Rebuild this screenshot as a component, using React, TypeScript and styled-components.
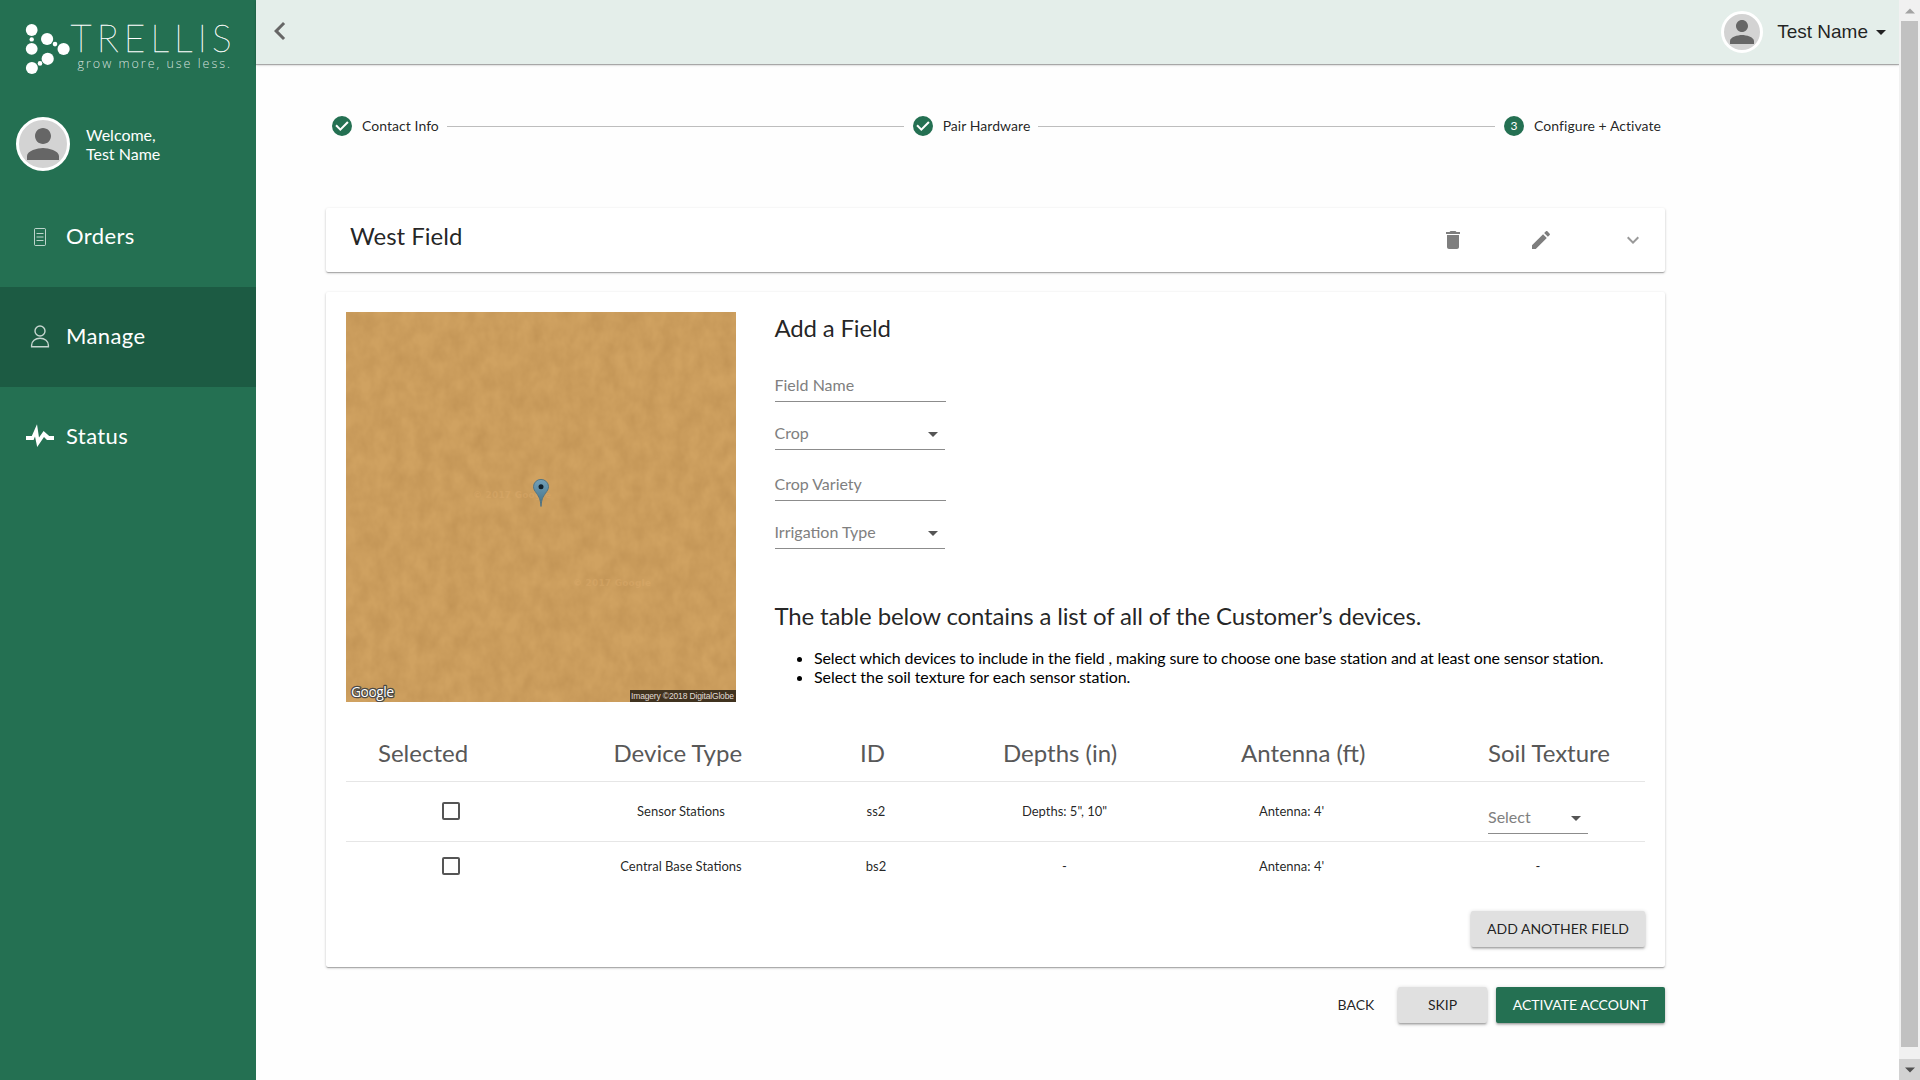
import React from 'react';
import styled, { createGlobalStyle } from 'styled-components';

const GREEN = '#247052';
const GREEN_DARK = '#1c5b43';
const INK = 'rgba(0, 0, 0, 0.87)';

const GlobalStyle = createGlobalStyle`
  *, *::before, *::after { box-sizing: border-box; }
  html, body { margin: 0; padding: 0; background: #fefefe; overflow: hidden; }
  body { font-family: Lato, "Liberation Sans", sans-serif; color: ${INK}; }
`;

const Shell = styled.div`
  display: flex;
  width: 1920px;
  height: 1080px;
`;

/* ---------- sidebar ---------- */

const Sidebar = styled.aside`
  width: 256px;
  flex: none;
  background: ${GREEN};
  color: #fff;
  display: flex;
  flex-direction: column;
`;

const LogoArea = styled.div`
  height: 117px;
  flex: none;
`;

const Profile = styled.div`
  display: flex;
  align-items: center;
  gap: 16px;
  height: 54px;
  padding-left: 16px;
  margin-bottom: 16px;
  font-size: 16px;
  line-height: 19px;
`;

const Avatar = styled.span<{ $size: number }>`
  display: flex;
  align-items: center;
  justify-content: center;
  flex: none;
  width: ${(p) => p.$size}px;
  height: ${(p) => p.$size}px;
  border: 3px solid #fff;
  border-radius: 50%;
  background: #d3d3d3;
  color: #666;
  svg { flex: none; }
`;

const NavItem = styled.a<{ $active?: boolean }>`
  display: flex;
  align-items: center;
  height: 100px;
  padding-left: 25px;
  gap: 11px;
  font-size: 22px;
  letter-spacing: 0.4px;
  line-height: 26px;
  background: ${(p) => (p.$active ? GREEN_DARK : 'transparent')};
  svg { flex: none; }
`;

const NavLabel = styled.span`
  margin-bottom: 2px;
`;

/* ---------- main column ---------- */

const Main = styled.main`
  flex: 1;
  display: flex;
  flex-direction: column;
  background: #fefefe;
`;

const TopBar = styled.header`
  display: flex;
  align-items: center;
  height: 64px;
  flex: none;
  padding: 0 13px 0 6px;
  background: #e4eeea;
  box-shadow: 0 1px 1px rgba(0, 0, 0, 0.28), 0 1px 3px rgba(0, 0, 0, 0.14);
`;

const BackChevron = styled.button`
  display: flex;
  margin: 0 auto 2px 0;
  padding: 0;
  border: 0;
  background: none;
  color: #666;
`;

const UserName = styled.span`
  margin: 0 8px 1px 14px;
  font-family: "Liberation Sans", Arial, sans-serif;
  font-size: 19px;
  line-height: 24px;
`;

const Caret = styled.span`
  width: 0;
  height: 0;
  border-left: 5px solid transparent;
  border-right: 5px solid transparent;
  border-top: 5px solid #222;
`;

const Content = styled.div`
  display: flex;
  flex-direction: column;
  width: 1339px;
  margin-left: 70px;
  padding-top: 50px;
`;

const Stepper = styled.ol`
  display: flex;
  align-items: center;
  height: 24px;
  margin: 0 4px 70px;
  padding: 0;
  list-style: none;
  font-size: 14px;
  letter-spacing: 0.05px;
`;

const Step = styled.li`
  display: flex;
  align-items: center;
  gap: 8px;
  flex: none;
  white-space: nowrap;
`;

const StepLabel = styled.span`
  margin-bottom: 2px;
`;

const Connector = styled.li`
  flex: 1;
  height: 1px;
  margin: 0 7px 0 8px;
  background: #bdbdbd;
`;

const Card = styled.section`
  border-radius: 2px;
  background: #fff;
  box-shadow: 0 1px 3px rgba(0, 0, 0, 0.2), 0 1px 1px rgba(0, 0, 0, 0.14),
    0 2px 1px -1px rgba(0, 0, 0, 0.12);
`;

const SummaryCard = styled(Card)`
  display: flex;
  align-items: center;
  height: 64px;
  padding: 0 20px 0 24px;
  margin-bottom: 20px;
`;

const Title = styled.h2<{ $tracking?: number }>`
  margin: 0;
  font-size: 24px;
  font-weight: 400;
  line-height: 32px;
  letter-spacing: ${(p) => p.$tracking ?? 0}px;
`;

const SummaryTitle = styled(Title)`
  flex: 1;
  margin-bottom: 8px;
`;

const SummaryActions = styled.div`
  display: flex;
  align-items: center;
  color: #7e7e7e;
  svg { flex: none; }
  svg + svg { margin-left: 64px; }
  svg:last-child { margin-left: 68px; color: #999; }
`;

const FieldCard = styled(Card)`
  height: 675px;
  padding: 20px;
`;

const FieldTop = styled.div`
  display: flex;
  gap: 38.5px;
  height: 390px;
  margin-bottom: 23px;
`;

const MapSvg = styled.svg`
  display: block;
  flex: none;
`;

const FormColumn = styled.div`
  flex: 1;
`;

const Field = styled.div<{ $width: number; $top: number }>`
  display: flex;
  align-items: flex-start;
  justify-content: space-between;
  width: ${(p) => p.$width}px;
  height: 27px;
  margin-top: ${(p) => p.$top}px;
  border-bottom: 1px solid #8c8c8c;
  color: #808080;
  font-size: 16px;
  line-height: 19px;
  svg { margin-top: -1px; color: #555; }
`;

const TableIntro = styled(Title)`
  margin-top: 51px;
`;

const Notes = styled.ul`
  margin: 16px 0 0;
  padding-left: 39.5px;
  color: #000;
  font-size: 16px;
  line-height: 19px;
`;

const Note = styled.li<{ $tracking: number }>`
  letter-spacing: ${(p) => p.$tracking}px;
`;

const HeadRow = styled.div`
  display: grid;
  grid-template-columns: 235.5px 246.5px 143px 238px 247px 1fr;
  align-items: center;
  height: 57px;
  padding-left: 32px;
  border-bottom: 1px solid #e6e6e6;
  color: #585858;
  font-size: 24px;
  line-height: 32px;
`;

const BodyRow = styled.div<{ $height: number; $last?: boolean }>`
  display: grid;
  grid-template-columns: 210px 250px 140px 237px 217px 1fr;
  align-items: center;
  justify-items: center;
  height: ${(p) => p.$height}px;
  padding-bottom: 2px;
  border-bottom: ${(p) => (p.$last ? '0' : '1px solid #e6e6e6')};
  font-size: 13px;
`;

const SoilCell = styled.div`
  padding-left: 31px;
`;

const Checkbox = styled.span`
  width: 18px;
  height: 18px;
  border: 2px solid #555;
  border-radius: 2px;
`;

const Button = styled.button<{ $variant?: 'flat' | 'primary'; $width: number }>`
  width: ${(p) => p.$width}px;
  height: 36px;
  padding: 0 0 1px;
  border: 0;
  border-radius: 2px;
  font-family: inherit;
  font-size: 14px;
  line-height: 20px;
  white-space: nowrap;
  color: ${(p) => (p.$variant === 'primary' ? '#fff' : INK)};
  background: ${(p) =>
    p.$variant === 'primary' ? GREEN : p.$variant === 'flat' ? 'transparent' : '#e0e0e0'};
  box-shadow: ${(p) =>
    p.$variant === 'flat'
      ? 'none'
      : '0 1px 4px rgba(0,0,0,.2), 0 2px 2px rgba(0,0,0,.14), 0 2px 1px -1px rgba(0,0,0,.12)'};
`;

const CardActions = styled.div`
  display: flex;
  justify-content: flex-end;
  margin-top: 20px;
`;

const PageActions = styled.div`
  display: flex;
  justify-content: flex-end;
  margin-top: 20px;
  gap: 9px;
`;

/* ---------- scrollbar ---------- */

const ScrollTrack = styled.div`
  display: flex;
  flex-direction: column;
  align-items: center;
  width: 21px;
  flex: none;
  background: #f1f1f1;
`;

const ScrollButton = styled.div<{ $lit?: boolean }>`
  display: flex;
  align-items: center;
  justify-content: center;
  width: 21px;
  height: 21px;
  background: ${(p) => (p.$lit ? '#d2d2d2' : 'transparent')};
`;

const ScrollThumb = styled.div`
  width: 17px;
  height: 1026px;
  margin-bottom: auto;
  background: #c1c1c1;
`;

/* ---------- drawings ---------- */

const Glyph = ({ d, size = 24 }: { d: string; size?: number }) => (
  <svg width={size} height={size} viewBox="0 0 24 24" fill="currentColor">
    <path d={d} />
  </svg>
);

const PERSON =
  'M12 12c2.21 0 4-1.79 4-4s-1.79-4-4-4-4 1.79-4 4 1.79 4 4 4zm0 2c-2.67 0-8 1.34-8 4v2h16v-2c0-2.66-5.33-4-8-4z';
const CHEVRON_LEFT = 'M15.41 7.41L14 6l-6 6 6 6 1.41-1.41L10.83 12z';
const TRASH = 'M6 19c0 1.1.9 2 2 2h8c1.1 0 2-.9 2-2V7H6v12zM19 4h-3.5l-1-1h-5l-1 1H5v2h14V4z';
const PENCIL =
  'M3 17.25V21h3.75L17.81 9.94l-3.75-3.75L3 17.25zM20.71 7.04c.39-.39.39-1.02 0-1.41l-2.34-2.34c-.39-.39-1.02-.39-1.41 0l-1.83 1.83 3.75 3.75 1.83-1.83z';
const EXPAND = 'M16.59 8.59L12 13.17 7.41 8.59 6 10l6 6 6-6z';
const DROP = 'M7 10l5 5 5-5z';
const CHECK_CIRCLE =
  'M12 0a12 12 0 1 0 0 24 12 12 0 0 0 0-24zm-2 18l-6-6 1.7-1.7 4.3 4.3 8.2-8.3L20 8 10 18z';

const Logo = () => (
  <svg width="256" height="100" viewBox="0 0 256 100" fill="#fff">
    <circle cx="31.7" cy="30" r="5.9" />
    <circle cx="31.7" cy="39.4" r="2.2" />
    <circle cx="31.7" cy="48.8" r="5.9" />
    <circle cx="47.1" cy="39" r="6.1" />
    <circle cx="55" cy="44.1" r="2.3" />
    <circle cx="63.6" cy="49" r="6.1" />
    <circle cx="47.7" cy="58.8" r="6.1" />
    <circle cx="40" cy="63.4" r="2.3" />
    <circle cx="31.9" cy="68" r="6" />
    <text
      x="70.5"
      y="52"
      fontFamily="Lato, sans-serif"
      fontWeight="100"
      fontSize="37"
      textLength="161"
      stroke="#fff"
      strokeWidth="0.35"
    >
      TRELLIS
    </text>
    <text
      x="77.5"
      y="68.3"
      fontFamily="'Open Sans', 'Noto Sans', sans-serif"
      fontWeight="300"
      fontSize="12.5"
      fillOpacity="0.8"
      textLength="152.5"
    >
      grow more, use less.
    </text>
  </svg>
);

const OrdersIcon = () => (
  <svg width="30" height="30" viewBox="0 0 30 30" fill="none" stroke="#fff" strokeOpacity="0.7">
    <rect x="9.5" y="6.5" width="11" height="17" rx="1" />
    <path d="M11.5 11.5h7M11.5 15h7M11.5 18.5h7" />
  </svg>
);

const ManageIcon = () => (
  <svg width="30" height="30" viewBox="0 0 30 30" fill="none" stroke="#fff" strokeOpacity="0.75" strokeWidth="1.4">
    <circle cx="15" cy="9" r="5" />
    <path d="M6.6 24.8v-1.6c0-4 3.6-7 8.4-7s8.4 3 8.4 7v1.6z" />
  </svg>
);

const StatusIcon = () => (
  <svg width="30" height="30" viewBox="0 0 30 30" fill="#fff">
    <path d="M1 14h5.8L12 2.2l2 13.400L18.600 9l5.600 5H29v4h-7l-3-3-6.800 10L10 14.500 8.600 18H1z" />
  </svg>
);

const StepIcon = ({ label }: { label?: string }) => (
  <svg width="24" height="24" viewBox="0 0 24 24">
    {label ? (
      <>
        <circle cx="12" cy="12" r="10" fill={GREEN} />
        <text x="12" y="16" textAnchor="middle" fontSize="12" fill="#fff" fontFamily="Lato, sans-serif">
          {label}
        </text>
      </>
    ) : (
      <g transform="translate(2 2) scale(0.8333)">
        <path d={CHECK_CIRCLE} fill={GREEN} fillRule="evenodd" />
      </g>
    )}
  </svg>
);

const SatelliteMap = () => (
  <MapSvg width="390" height="390" viewBox="0 0 390 390">
    <defs>
      <filter id="sand" x="0" y="0" width="100%" height="100%" colorInterpolationFilters="sRGB">
        <feTurbulence type="fractalNoise" baseFrequency="0.07 0.05" numOctaves="3" seed="8" />
        <feColorMatrix values="0 0 0 0 0.6  0 0 0 0 0.42  0 0 0 0 0.2  0.35 0 0 0 -0.08" />
      </filter>
      <linearGradient id="pin" x1="0" y1="0" x2="0" y2="1">
        <stop offset="0" stopColor="#73a0b8" />
        <stop offset="1" stopColor="#3f7087" />
      </linearGradient>
    </defs>
    <rect width="390" height="390" fill="#d0a261" />
    <rect width="390" height="390" filter="url(#sand)" />
    <g fontFamily="'DejaVu Sans', sans-serif" fontWeight="700" fontSize="9" fill="#dcab6c" fillOpacity="0.45">
      <text x="127" y="186" textLength="78">© 2017 Google</text>
      <text x="227" y="274" textLength="78">© 2017 Google</text>
    </g>
    <path
      d="M195 194.5c-.6-7.5-2-9.7-4.5-13.2-1.8-2.6-3-4.1-3-6.6a7.5 7.3 0 0 1 15 0c0 2.5-1.2 4-3 6.6-2.5 3.5-3.9 5.7-4.5 13.2z"
      fill="url(#pin)"
      stroke="#4a7083"
      strokeWidth="0.9"
    />
    <circle cx="195" cy="174.7" r="2.5" fill="#10202b" />
    <text
      x="5"
      y="385"
      fontFamily="'Open Sans', sans-serif"
      fontWeight="500"
      fontSize="14"
      textLength="43"
      fill="#fff"
      stroke="#4d4a45"
      strokeWidth="2.6"
      strokeLinejoin="round"
      paintOrder="stroke"
    >
      Google
    </text>
    <rect x="284" y="378" width="106" height="12" fill="#40321f" />
    <text x="285" y="387" fontFamily="'Liberation Sans', sans-serif" fontSize="8.5" textLength="103" fill="#e0dcd6">
      Imagery ©2018 DigitalGlobe
    </text>
  </MapSvg>
);

const Arrow = ({ up }: { up?: boolean }) => (
  <svg width="10" height="6" viewBox="0 0 10 6" fill={up ? '#a3a3a3' : '#505050'}>
    <path d={up ? 'M0 5.5L5 .5l5 5z' : 'M0 .5h10l-5 5z'} />
  </svg>
);

const columns = ['Selected', 'Device Type', 'ID', 'Depths (in)', 'Antenna (ft)', 'Soil Texture'];

const devices = [
  { type: 'Sensor Stations', id: 'ss2', depths: 'Depths: 5", 10"', antenna: "Antenna: 4'", soil: true, height: 60 },
  { type: 'Central Base Stations', id: 'bs2', depths: '-', antenna: "Antenna: 4'", soil: false, height: 49 },
];

export default function App() {
  return (
    <>
      <GlobalStyle />
      <Shell>
        <Sidebar>
          <LogoArea>
            <Logo />
          </LogoArea>
          <Profile>
            <Avatar $size={54}>
              <Glyph d={PERSON} size={48} />
            </Avatar>
            <span>
              Welcome,
              <br />
              Test Name
            </span>
          </Profile>
          <NavItem>
            <OrdersIcon />
            <NavLabel>Orders</NavLabel>
          </NavItem>
          <NavItem $active>
            <ManageIcon />
            <NavLabel>Manage</NavLabel>
          </NavItem>
          <NavItem>
            <StatusIcon />
            <NavLabel>Status</NavLabel>
          </NavItem>
        </Sidebar>

        <Main>
          <TopBar>
            <BackChevron aria-label="Back">
              <Glyph d={CHEVRON_LEFT} size={36} />
            </BackChevron>
            <Avatar $size={42}>
              <Glyph d={PERSON} size={36} />
            </Avatar>
            <UserName>Test Name</UserName>
            <Caret />
          </TopBar>

          <Content>
            <Stepper>
              <Step>
                <StepIcon />
                <StepLabel>Contact Info</StepLabel>
              </Step>
              <Connector />
              <Step>
                <StepIcon />
                <StepLabel>Pair Hardware</StepLabel>
              </Step>
              <Connector />
              <Step>
                <StepIcon label="3" />
                <StepLabel>Configure + Activate</StepLabel>
              </Step>
            </Stepper>

            <SummaryCard>
              <SummaryTitle>West Field</SummaryTitle>
              <SummaryActions>
                <Glyph d={TRASH} />
                <Glyph d={PENCIL} />
                <Glyph d={EXPAND} />
              </SummaryActions>
            </SummaryCard>

            <FieldCard>
              <FieldTop>
                <SatelliteMap />
                <FormColumn>
                  <Title $tracking={-0.18}>Add a Field</Title>
                  <Field $width={171} $top={31}>Field Name</Field>
                  <Field $width={170} $top={21}>
                    Crop
                    <Glyph d={DROP} />
                  </Field>
                  <Field $width={171} $top={24}>Crop Variety</Field>
                  <Field $width={170} $top={21}>
                    Irrigation Type
                    <Glyph d={DROP} />
                  </Field>
                  <TableIntro $tracking={-0.15}>
                    The table below contains a list of all of the Customer’s devices.
                  </TableIntro>
                  <Notes>
                    <Note $tracking={-0.142}>
                      Select which devices to include in the field , making sure to choose one base station and at
                      least one sensor station.
                    </Note>
                    <Note $tracking={-0.06}>Select the soil texture for each sensor station.</Note>
                  </Notes>
                </FormColumn>
              </FieldTop>

              <HeadRow>
                {columns.map((name) => (
                  <span key={name}>{name}</span>
                ))}
              </HeadRow>
              {devices.map((device, i) => (
                <BodyRow key={device.id} $height={device.height} $last={i === devices.length - 1}>
                  <Checkbox />
                  <span>{device.type}</span>
                  <span>{device.id}</span>
                  <span>{device.depths}</span>
                  <span>{device.antenna}</span>
                  <SoilCell>
                    {device.soil ? (
                      <Field $width={100} $top={20}>
                        Select
                        <Glyph d={DROP} />
                      </Field>
                    ) : (
                      '-'
                    )}
                  </SoilCell>
                </BodyRow>
              ))}
              <CardActions>
                <Button $width={174}>ADD ANOTHER FIELD</Button>
              </CardActions>
            </FieldCard>

            <PageActions>
              <Button $variant="flat" $width={66}>BACK</Button>
              <Button $width={89}>SKIP</Button>
              <Button $variant="primary" $width={169}>ACTIVATE ACCOUNT</Button>
            </PageActions>
          </Content>
        </Main>

        <ScrollTrack>
          <ScrollButton>
            <Arrow up />
          </ScrollButton>
          <ScrollThumb />
          <ScrollButton $lit>
            <Arrow />
          </ScrollButton>
        </ScrollTrack>
      </Shell>
    </>
  );
}
